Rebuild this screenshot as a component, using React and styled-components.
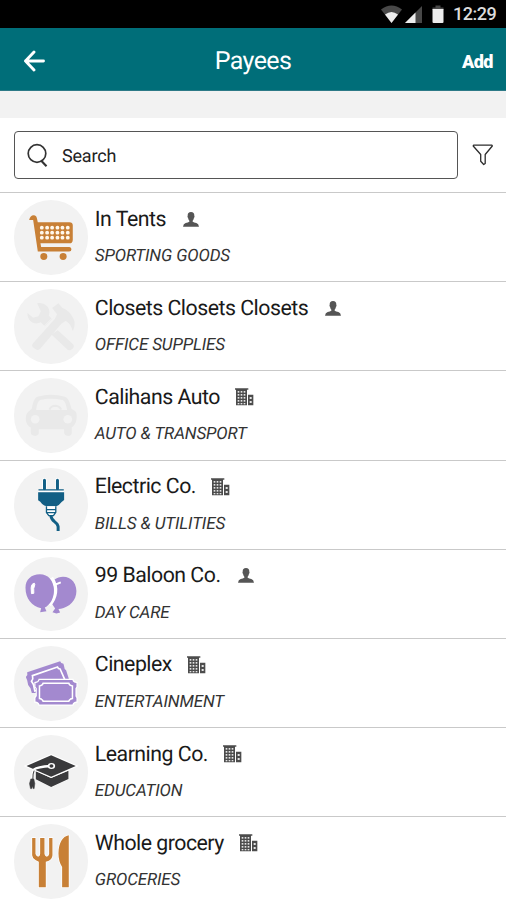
import React from 'react';
import styled, { createGlobalStyle } from 'styled-components';

const colors = {
  primary: '#006e79',
  orange: '#c88036',
  blue: '#125f85',
  purple: '#a389cf',
  dark: '#3a3a3c',
  faded: '#e9e9e9',
  circle: '#f2f2f2',
};

const GlobalStyle = createGlobalStyle`
  * {
    box-sizing: border-box;
  }

  body {
    margin: 0;
    background-color: white;
    font-family: Roboto, sans-serif;
    text-rendering: geometricPrecision;
    overflow: hidden;
  }
`;

/* Category icons, each one drawn on a 224 x 224 circle */

const CartIcon = () => (
  <CategorySvg viewBox="40.5 30 224 224">
    <path
      d="M86 90 C88 80 94 75 101 76 C107 77 109 82 110 88 L112 97 H207 Q217 97 217 106 V149 Q217 160 207 160 H120 L122 171 H207 Q213 172 213 178 Q213 185 206 185 H112 L98 90 Z"
      fill={colors.orange}
    />
    <circle cx="130" cy="200" r="10.5" fill={colors.orange} />
    <circle cx="188" cy="200" r="10.5" fill={colors.orange} />
    {[113, 128, 143].map((y) =>
      [124, 140, 155, 171, 186, 202].map((x) => (
        <circle key={`${x}-${y}`} cx={x} cy={y} r="5.8" fill="#fff8ec" />
      ))
    )}
  </CategorySvg>
);

const ToolsIcon = () => (
  <CategorySvg viewBox="40.5 27 224 224">
    <g fill={colors.faded}>
      <path d="M110 70 C128 66 146 77 147 96 C147 100 146 104 145 107 L155 117 L133 139 L121 127 C101 137 80 123 81 99 L98 113 L114 109 L121 94 Z" />
      <path d="M172 151 L218 193 Q223 199 218 205 L211 210 Q204 213 199 207 L153 164 Z" />
      <path d="M155 84 L174 70 L185 83 C202 89 216 104 222 124 Q224 141 217 153 C212 138 206 127 195 123 L182 132 L120 206 Q113 213 107 209 L97 202 Q92 197 97 191 L163 117 L170 103 Z" />
    </g>
    <path d="M128 142 L160 110" stroke={colors.circle} strokeWidth="3" />
  </CategorySvg>
);

const CarIcon = () => (
  <CategorySvg viewBox="40.5 25 224 224">
    <path
      fillRule="evenodd"
      fill={colors.faded}
      d="M94 117 C98 94 103 84 111 81 C137 73 168 73 193 81 C202 84 208 95 213 117 L225 125 Q231 135 228 151 Q225 166 214 173 V190 Q213 199 203 199 Q192 199 191 189 V179 H115 V189 Q114 199 104 199 Q92 199 91 189 V174 Q77 166 76 151 Q75 132 86 124 Z M107 121 H200 C197 103 193 94 187 91 C164 86 139 86 119 91 C112 95 109 105 107 121 Z"
    />
    <path d="M147 120 Q151 108 165 108 Q178 109 182 120" fill="none" stroke={colors.faded} strokeWidth="6" />
    <circle cx="104" cy="149" r="13" fill={colors.circle} />
    <circle cx="202" cy="149" r="13" fill={colors.circle} />
  </CategorySvg>
);

const PlugIcon = () => (
  <CategorySvg viewBox="40.5 23 224 224">
    <path
      d="M132 60 V86 M171 60 V86"
      stroke="white"
      strokeWidth="14"
      strokeLinecap="round"
    />
    <path d="M132 60 V85 M171 60 V85" stroke={colors.blue} strokeWidth="9" strokeLinecap="round" />
    <path d="M113 92.5 H191" stroke="white" strokeWidth="5" />
    <path d="M114 88.5 H190" stroke={colors.blue} strokeWidth="4" />
    <path
      d="M113 96 H191 V119 Q181 126 175 134 Q169 138 165 138 H139 Q131 137 125 131 Q120 124 113 120 Z"
      fill={colors.blue}
    />
    <path d="M137 138 H166 V155 L160 166 H144 L137 157 Z" fill="white" />
    <path
      d="M138 138 V157 L145 166 H159 L166 156 V138 M138 148 H166 M139 157 H165"
      fill="none"
      stroke={colors.blue}
      strokeWidth="4"
    />
    <path
      d="M151 166 Q153 178 162 184 Q172 191 173 199 V212"
      fill="none"
      stroke={colors.blue}
      strokeWidth="9"
    />
  </CategorySvg>
);

const BalloonsIcon = () => (
  <CategorySvg viewBox="40.5 26 224 224">
    <path
      fill={colors.purple}
      d="M161 94 C181 79 207 84 218 99 C236 123 228 156 207 170 C194 179 184 181 174 182 L179 193 L168 196 L156 192 L164 181 L153 164 Z"
    />
    <path d="M153 88 C173 118 166 148 147 170" fill="none" stroke="white" strokeWidth="11" />
    <path
      fill={colors.purple}
      d="M118 78 C144 78 160 98 160 125 C161 151 149 169 133 178 L138 189 L119 192 L122 180 C94 173 75 151 75 118 C75 94 93 78 118 78 Z"
    />
    <path d="M102 105 Q93 105 92 119 L93 136 L100 135 Q98 119 103 109 Z" fill="white" stroke="white" strokeWidth="3" />
    <path d="M165 115 Q164 106 171 106 L181 102" fill="none" stroke="white" strokeWidth="6" />
  </CategorySvg>
);

const TicketsIcon = () => (
  <CategorySvg viewBox="40.5 23 224 224">
    <path
      d="M80 102 L179 69 Q181 76 189 76 L192 88 Q191 92 197 96 L208 130 L108 164 H94 L90 150 L83 140 L80 126 L76 116 Q83 110 80 102 Z"
      fill={colors.purple}
    />
    <path
      d="M96 112 L171 86 Q173 92 179 92 L194 126 L103 158 L99 139 L93 129 Q99 121 96 112 Z"
      fill={colors.purple}
      stroke="white"
      strokeWidth="5"
    />
    <path
      d="M117 125 H216 Q217 133 228 134 V145 L225 150 V174 L228 179 V190 Q218 191 216 199 H117 Q115 191 105 190 V179 L109 173 V150 L105 145 V134 Q115 133 117 125 Z"
      fill="none"
      stroke="white"
      strokeWidth="7"
    />
    <path
      d="M117 125 H216 Q217 133 228 134 V145 L225 150 V174 L228 179 V190 Q218 191 216 199 H117 Q115 191 105 190 V179 L109 173 V150 L105 145 V134 Q115 133 117 125 Z"
      fill={colors.purple}
    />
    <path
      d="M128 135 H205 Q207 142 216 143 V181 Q207 182 205 189 H128 Q126 182 117 181 V143 Q126 142 128 135 Z"
      fill="none"
      stroke="white"
      strokeWidth="4.5"
    />
    <rect x="124" y="142" width="84" height="41" rx="3" fill={colors.purple} />
  </CategorySvg>
);

const GraduationIcon = () => (
  <CategorySvg viewBox="40.5 24 224 224">
    <path
      d="M106 132 L152 153 L204 131 V156 L152 180 L106 157 Z"
      fill={colors.dark}
      stroke="white"
      strokeWidth="3"
      paintOrder="stroke"
    />
    <path
      d="M78 117 L152 85 L226 117 L152 149 Z"
      fill={colors.dark}
      stroke="white"
      strokeWidth="7"
      paintOrder="stroke"
    />
    <path d="M152 117 C125 119 110 120 101 127 Q96 135 96 154" fill="none" stroke="white" strokeWidth="7" />
    <path d="M101 131 Q97 138 97 158" fill="none" stroke={colors.dark} strokeWidth="3" />
    <ellipse cx="153" cy="117" rx="11" ry="9" fill="white" />
    <ellipse cx="153" cy="117" rx="6" ry="5" fill={colors.dark} />
    <path
      d="M91 156 H100 L103 170 L101 185 H98 L96 177 L94 185 H90 L87 170 Z"
      fill={colors.dark}
      stroke={colors.dark}
      strokeWidth="1.5"
    />
  </CategorySvg>
);

const CutleryIcon = () => (
  <CategorySvg viewBox="40.5 24 224 224">
    <g fill={colors.orange} stroke="white" strokeWidth="4" paintOrder="stroke">
      <path d="M95 66 H105 V114 Q107 121 113 122 Q119 121 119 114 V66 H132 V114 Q133 121 139 122 Q145 120 146 114 V66 H156 V118 Q155 130 145 134 L136 137 V214 H115 V137 L105 132 Q96 128 95 118 Z" />
      <path d="M205 58 V214 H185 V153 Q174 137 174 112 C175 80 186 62 205 58 Z" />
    </g>
  </CategorySvg>
);

/* Small icons next to the payee name */

const PersonIcon = () => (
  <svg width="16" height="15" viewBox="0 0 48 45">
    <path
      fill="#555"
      d="M24 0 C31 0 34 4 34 11 Q36 15 33 17 Q32 23 29 26 V29 Q33 32 40 33 Q47 35 48 44 H0 Q1 35 8 33 Q15 32 19 29 V26 Q16 23 15 17 Q12 15 14 11 C14 4 17 0 24 0 Z"
    />
  </svg>
);

const BusinessIcon = () => (
  <svg width="19" height="18" viewBox="0 0 57 54">
    <path fill="#4c4c4c" d="M0 1 H40 V5 H36 V52 H3 V5 H0 Z M39 20 H55 V52 H39 Z" />
    <g fill="#e4e4e4">
      {[9, 18, 27, 36].map((y) =>
        [8, 17, 26].map((x) => <rect key={`${x}-${y}`} x={x} y={y} width="5" height="5" />)
      )}
      <rect x="8" y="45" width="5" height="4" />
      <rect x="17" y="45" width="5" height="4" />
      <rect x="26" y="45" width="5" height="4" />
      <rect x="44" y="27" width="6" height="6" />
      <rect x="44" y="39" width="6" height="6" />
    </g>
  </svg>
);

const payees = [
  { name: 'In Tents', category: 'SPORTING GOODS', Icon: CartIcon, person: true },
  { name: 'Closets Closets Closets', category: 'OFFICE SUPPLIES', Icon: ToolsIcon, person: true },
  { name: 'Calihans Auto', category: 'AUTO & TRANSPORT', Icon: CarIcon },
  { name: 'Electric Co.', category: 'BILLS & UTILITIES', Icon: PlugIcon },
  { name: '99 Baloon Co.', category: 'DAY CARE', Icon: BalloonsIcon, person: true },
  { name: 'Cineplex', category: 'ENTERTAINMENT', Icon: TicketsIcon },
  { name: 'Learning Co.', category: 'EDUCATION', Icon: GraduationIcon },
  { name: 'Whole grocery', category: 'GROCERIES', Icon: CutleryIcon },
];

const App = () => (
  <Screen>
    <GlobalStyle />
    <StatusBar>
      <svg width="60" height="20" viewBox="0 0 60 20">
        <path d="M0 4.5 Q10.5 -3.5 21 4.5 L10.5 18 Z" fill="#484848" />
        <path d="M4 9.5 Q10.5 4.5 17 9.5 L10.5 18 Z" fill="#ececec" />
        <path d="M41 1 V18 H24 Z" fill="#484848" />
        <path d="M34.5 7.5 V18 H24 Z" fill="#ececec" />
      </svg>
      <BatteryIcon viewBox="0 0 12 19">
        <path d="M3.5 0.5 H8.5 V2.5 H11.5 V5 H0.5 V2.5 H3.5 Z" fill="#484848" />
        <path d="M0.5 4 H11.5 V17 Q11.5 18 10.5 18 H1.5 Q0.5 18 0.5 17 Z" fill="#ececec" />
      </BatteryIcon>
      <Clock>12:29</Clock>
    </StatusBar>

    <Header>
      <BackButton aria-label="Back">
        <svg width="22" height="22" viewBox="0 0 22 22">
          <path
            d="M11 2 L2.5 11 L11 20 M2.5 11 H20.5"
            fill="none"
            stroke="white"
            strokeWidth="2.9"
            strokeLinecap="round"
            strokeLinejoin="round"
          />
        </svg>
      </BackButton>
      <Title>Payees</Title>
      <AddButton>Add</AddButton>
    </Header>
    <Divider />

    <SearchBar>
      <SearchField>
        <svg width="22" height="25" viewBox="0 0 22 25">
          <circle cx="10" cy="10.5" r="8.8" fill="none" stroke="#333" strokeWidth="1.7" />
          <path d="M14 17.5 L19.5 23.3" stroke="#333" strokeWidth="2.1" />
        </svg>
        <SearchLabel>Search</SearchLabel>
      </SearchField>
      <svg width="22" height="22" viewBox="0 0 22 22">
        <path
          d="M1.5 1.2 H20 L20.3 2 L13.2 10.5 V19.5 L11.7 20.5 L8.7 17.3 V10.5 L1.2 2 Z"
          fill="none"
          stroke="#2c2c2c"
          strokeWidth="1.3"
          strokeLinejoin="round"
        />
      </svg>
    </SearchBar>

    <PayeeList>
      {payees.map(({ name, category, Icon, person }) => (
        <PayeeRow key={name}>
          <Icon />
          <PayeeInfo>
            <NameLine $gap={person ? 17 : 15.5}>
              <PayeeName>{name}</PayeeName>
              {person ? <PersonIcon /> : <BusinessIcon />}
            </NameLine>
            <Category>{category}</Category>
          </PayeeInfo>
        </PayeeRow>
      ))}
    </PayeeList>
  </Screen>
);

export default App;

const Screen = styled.div`
  display: flex;
  flex-direction: column;
  width: 506px;
  height: 900px;
  overflow: hidden;
  background-color: white;
`;

const StatusBar = styled.div`
  display: flex;
  align-items: center;
  justify-content: flex-end;
  flex: none;
  height: 28px;
  padding: 1px 9px 0 0;
  background-color: black;
`;

const BatteryIcon = styled.svg`
  width: 12px;
  height: 19px;
  margin-left: -9px;
`;

const Clock = styled.span`
  width: 44px;
  margin-left: 9px;
  color: #dcdcdc;
  font-size: 18px;
  font-weight: 500;
  letter-spacing: -0.5px;
  line-height: 28px;
  white-space: nowrap;
`;

const Header = styled.header`
  display: grid;
  grid-template-columns: 80px 1fr 80px;
  align-items: center;
  flex: none;
  height: 63px;
  padding-top: 3px;
  background-color: ${colors.primary};
  border-bottom: 1px solid #2d7a87;
  color: white;
`;

const BackButton = styled.button`
  display: flex;
  padding: 0 0 0 23px;
  border: none;
  background: none;
`;

const Title = styled.h1`
  margin: 2px 0 0;
  font-size: 25px;
  font-weight: 400;
  letter-spacing: -0.6px;
  line-height: 30px;
  text-align: center;
`;

const AddButton = styled.button`
  padding: 2px 13px 0 0;
  border: none;
  background: none;
  color: white;
  font-family: inherit;
  font-size: 18px;
  font-weight: 900;
  letter-spacing: -0.5px;
  text-align: right;
`;

const Divider = styled.div`
  flex: none;
  height: 27px;
  background-color: #f2f2f2;
`;

const SearchBar = styled.div`
  display: flex;
  align-items: center;
  flex: none;
  gap: 14px;
  height: 74px;
  padding: 0 0 0 13.5px;
`;

const SearchField = styled.div`
  display: flex;
  align-items: center;
  width: 444.5px;
  height: 48px;
  padding-left: 12.5px;
  border: 1.5px solid #555;
  border-radius: 4px;
`;

const SearchLabel = styled.span`
  margin: 2px 0 0 13px;
  color: #222;
  font-size: 18px;
  letter-spacing: -0.2px;
`;

const PayeeList = styled.ul`
  margin: 0;
  padding: 0;
  list-style: none;
`;

const PayeeRow = styled.li`
  display: flex;
  height: 89.2px;
  padding: 7px 0 0 13.5px;
  border-top: 1px solid #c9c9c9;
`;

const CategorySvg = styled.svg`
  flex: none;
  width: 74.6px;
  height: 74.6px;
  border-radius: 50%;
  background-color: ${colors.circle};
`;

const PayeeInfo = styled.div`
  padding: 6px 0 0 6.7px;
`;

const NameLine = styled.div`
  display: flex;
  align-items: center;
  gap: ${({ $gap }) => $gap}px;
  height: 26px;
`;

const PayeeName = styled.span`
  color: #1a1a1a;
  font-size: 21.3px;
  letter-spacing: -0.5px;
  white-space: pre;
`;

const Category = styled.div`
  margin-top: 13px;
  color: #333;
  font-size: 17px;
  font-style: italic;
  letter-spacing: -0.13px;
  line-height: 22px;
`;
